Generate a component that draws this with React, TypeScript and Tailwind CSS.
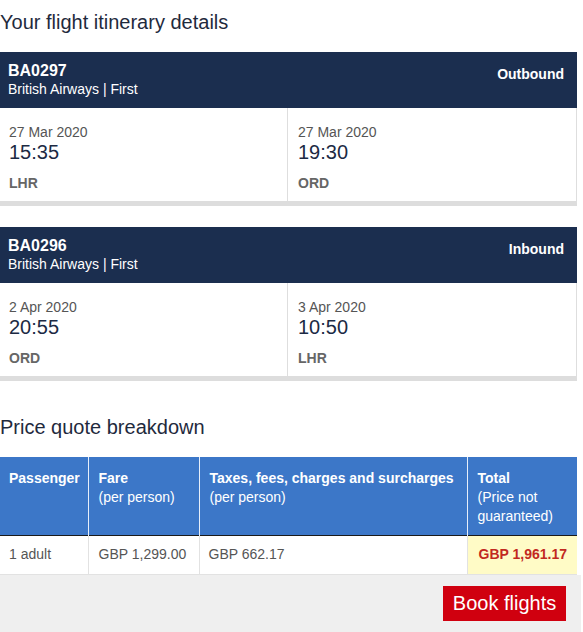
import React from 'react';

interface Leg {
  date: string;
  time: string;
  airport: string;
}

interface Flight {
  code: string;
  carrier: string;
  direction: string;
  from: Leg;
  to: Leg;
}

const flights: Flight[] = [
  {
    code: 'BA0297',
    carrier: 'British Airways | First',
    direction: 'Outbound',
    from: { date: '27 Mar 2020', time: '15:35', airport: 'LHR' },
    to: { date: '27 Mar 2020', time: '19:30', airport: 'ORD' },
  },
  {
    code: 'BA0296',
    carrier: 'British Airways | First',
    direction: 'Inbound',
    from: { date: '2 Apr 2020', time: '20:55', airport: 'ORD' },
    to: { date: '3 Apr 2020', time: '10:50', airport: 'LHR' },
  },
];

const LegCell: React.FC<{ leg: Leg; last?: boolean }> = ({ leg, last }) => (
  <div className={`flex-1 pt-[15px] pb-[10px] ${last ? 'pl-[10px]' : 'pl-[9px] border-r border-[#dedede]'}`}>
    <div className="text-[14px] leading-[18px] text-[#555]">{leg.date}</div>
    <div className="text-[20px] leading-[22px] text-[#1c2a44]">{leg.time}</div>
    <div className="mt-[12px] text-[14px] leading-[16px] font-bold text-[#666]">{leg.airport}</div>
  </div>
);

const FlightCard: React.FC<{ flight: Flight }> = ({ flight }) => (
  <div className="w-[577px]">
    <div className="flex justify-between bg-[#1b2e4f] text-white pl-[8px] pr-[13px] pt-[10px] pb-[10px]">
      <div>
        <div className="text-[16px] leading-[18px] font-bold">{flight.code}</div>
        <div className="text-[14px] leading-[18px]">{flight.carrier}</div>
      </div>
      <div className="mt-[4px] text-[14px] leading-[16px] font-bold">{flight.direction}</div>
    </div>
    <div className="flex bg-white border-r border-[#dedede] border-b-[5px] border-b-[#dddddd]">
      <LegCell leg={flight.from} />
      <LegCell leg={flight.to} last />
    </div>
  </div>
);

export default function App() {
  return (
    <div className="w-[583px] h-[632px] bg-white overflow-hidden" style={{ fontFamily: '"Liberation Sans", Arial, sans-serif' }}>
      <h1 className="pt-[10px] text-[20px] leading-[24px] text-[#1f2a3d]">Your flight itinerary details</h1>

      <div className="mt-[18px]">
        <FlightCard flight={flights[0]} />
      </div>
      <div className="mt-[21px]">
        <FlightCard flight={flights[1]} />
      </div>

      <h2 className="mt-[34px] text-[20px] leading-[24px] text-[#1f2a3d]">Price quote breakdown</h2>

      <table className="mt-[18px] w-[577px] border-collapse text-[14px] leading-[19px]">
        <thead>
          <tr className="bg-[#3c77c8] text-white align-top h-[78px] border-b border-b-[#1a1a1a]">
            <th className="w-[88px] text-left pl-[9px] pt-[12px] font-bold border-r border-[#e6eefa]">Passenger</th>
            <th className="w-[111px] text-left pl-[10px] pt-[12px] border-r border-[#e6eefa]">
              <div className="font-bold">Fare</div>
              <div className="font-normal">(per person)</div>
            </th>
            <th className="w-[268px] text-left pl-[10px] pt-[12px] border-r border-[#e6eefa]">
              <div className="font-bold">Taxes, fees, charges and surcharges</div>
              <div className="font-normal">(per person)</div>
            </th>
            <th className="text-left pl-[10px] pt-[12px]">
              <div className="font-bold">Total</div>
              <div className="font-normal">(Price not guaranteed)</div>
            </th>
          </tr>
        </thead>
        <tbody>
          <tr className="h-[39px] text-[#555] border-b border-[#e2e2e2]">
            <td className="pl-[9px] border-r border-[#e2e2e2]">1 adult</td>
            <td className="pl-[10px] border-r border-[#e2e2e2]">GBP 1,299.00</td>
            <td className="pl-[9px] border-r border-[#e2e2e2]">GBP 662.17</td>
            <td className="pl-[11px] bg-[#fffbc6] font-bold text-[#c2291f]">GBP 1,961.17</td>
          </tr>
        </tbody>
      </table>

      <div className="w-[581px] h-[60px] bg-[#efefef] flex justify-end items-start pt-[11px] pr-[15px]">
        <button className="w-[123px] h-[35px] bg-[#d0000f] text-white text-[20px] leading-[24px]">Book flights</button>
      </div>
    </div>
  );
}
